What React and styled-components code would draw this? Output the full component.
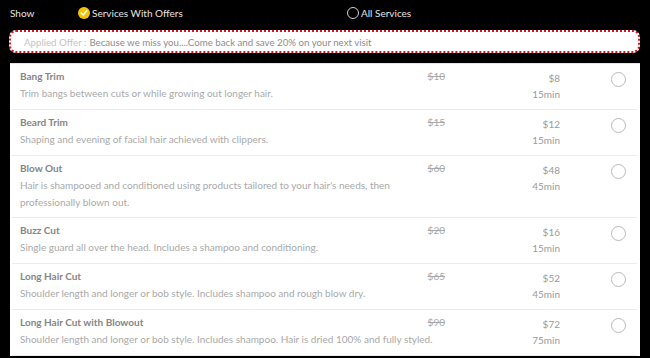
import React from 'react';
import styled, { createGlobalStyle } from 'styled-components';

const GlobalStyle = createGlobalStyle`
    html, body {
        margin: 0;
        padding: 0;
        background: #000;
    }
    body {
        font-family: Lato, "Open Sans", sans-serif;
        font-size: 10px;
        overflow: hidden;
    }
`;

const services = [
    { name: 'Bang Trim', desc: 'Trim bangs between cuts or while growing out longer hair.', oldPrice: '$10', price: '$8', time: '15min' },
    { name: 'Beard Trim', desc: 'Shaping and evening of facial hair achieved with clippers.', oldPrice: '$15', price: '$12', time: '15min' },
    { name: 'Blow Out', desc: "Hair is shampooed and conditioned using products tailored to your hair's needs, then professionally blown out.", oldPrice: '$60', price: '$48', time: '45min' },
    { name: 'Buzz Cut', desc: 'Single guard all over the head. Includes a shampoo and conditioning.', oldPrice: '$20', price: '$16', time: '15min' },
    { name: 'Long Hair Cut', desc: 'Shoulder length and longer or bob style. Includes shampoo and rough blow dry.', oldPrice: '$65', price: '$52', time: '45min' },
    { name: 'Long Hair Cut with Blowout', desc: 'Shoulder length and longer or bob style. Includes shampoo. Hair is dried 100% and fully styled.', oldPrice: '$90', price: '$72', time: '75min' },
];

const Page = styled.div`
    background: #000;
    height: 358px;
    overflow: hidden;
    padding-top: 3px;
    box-sizing: border-box;
`;

const FilterBar = styled.div`
    display: grid;
    grid-template-columns: 68px 269px 1fr;
    align-items: center;
    height: 20px;
    padding-left: 10px;
    color: #e6e6e6;
    font-size: 10px;
`;

const Option = styled.label`
    display: flex;
    align-items: center;
    gap: 2px;
`;

const CheckDot = styled.span`
    width: 12px;
    height: 12px;
    border-radius: 50%;
    background: #f5c400;
    display: flex;
    align-items: center;
    justify-content: center;
`;

const EmptyDot = styled.span`
    width: 10px;
    height: 10px;
    border-radius: 50%;
    border: 1px solid #cfcfcf;
`;

const OfferBox = styled.div`
    margin: 7px 10px 0 9px;
    height: 19px;
    border: 2px dotted #e0101a;
    border-radius: 7px;
    background: #fff;
    display: flex;
    align-items: center;
    padding-left: 13px;
    color: #8c8c8c;
    font-size: 9.7px;
`;

const OfferLabel = styled.span`
    color: #c4c4c4;
    margin-right: 3px;
`;

const Panel = styled.div`
    margin: 10px 10px 0 10px;
    background: #fff;
    padding: 0 3px 0 2px;
    border-top: 1px solid #e4e4e4;
`;

const Row = styled.div`
    display: flex;
    align-items: flex-start;
    padding: 4px 0 7px 8px;
    border-bottom: 1px solid #ececec;
    line-height: 17px;
`;

const Info = styled.div`
    width: 405px;
    flex-shrink: 0;
`;

const Name = styled.div`
    color: #858585;
    font-weight: 700;
`;

const Desc = styled.div`
    color: #a9a9a9;
    margin-right: -9px;
    line-height: 16.5px;
`;

const OldPrice = styled.div`
    width: 20px;
    text-align: right;
    color: #a8a8a8;
    text-decoration: line-through;
`;

const PriceCol = styled.div`
    width: 115px;
    text-align: right;
    color: #9a9a9a;
    padding-top: 2px;
    line-height: 16px;
`;

const SelectCol = styled.div`
    flex: 1;
    display: flex;
    justify-content: center;
    padding-top: 4px;
    padding-left: 40px;
`;

const Radio = styled.span`
    width: 13px;
    height: 13px;
    border-radius: 50%;
    border: 1px solid #b9b9b9;
`;

const App = () => {
    return (
        <Page>
            <GlobalStyle />
            <FilterBar>
                <span>Show</span>
                <Option>
                    <CheckDot>
                        <svg width="8" height="8" viewBox="0 0 8 8">
                            <path d="M1.2 4.2 L3.2 6 L6.8 1.8" fill="none" stroke="#fff" strokeWidth="1.6" strokeLinecap="round" strokeLinejoin="round" />
                        </svg>
                    </CheckDot>
                    Services With Offers
                </Option>
                <Option>
                    <EmptyDot />
                    All Services
                </Option>
            </FilterBar>
            <OfferBox>
                <OfferLabel>Applied Offer :</OfferLabel>
                Because we miss you....Come back and save 20% on your next visit
            </OfferBox>
            <Panel>
                {services.map((s) => (
                    <Row key={s.name}>
                        <Info>
                            <Name>{s.name}</Name>
                            <Desc>{s.desc}</Desc>
                        </Info>
                        <OldPrice>{s.oldPrice}</OldPrice>
                        <PriceCol>
                            <div>{s.price}</div>
                            <div>{s.time}</div>
                        </PriceCol>
                        <SelectCol>
                            <Radio />
                        </SelectCol>
                    </Row>
                ))}
            </Panel>
        </Page>
    );
};

export default App;
